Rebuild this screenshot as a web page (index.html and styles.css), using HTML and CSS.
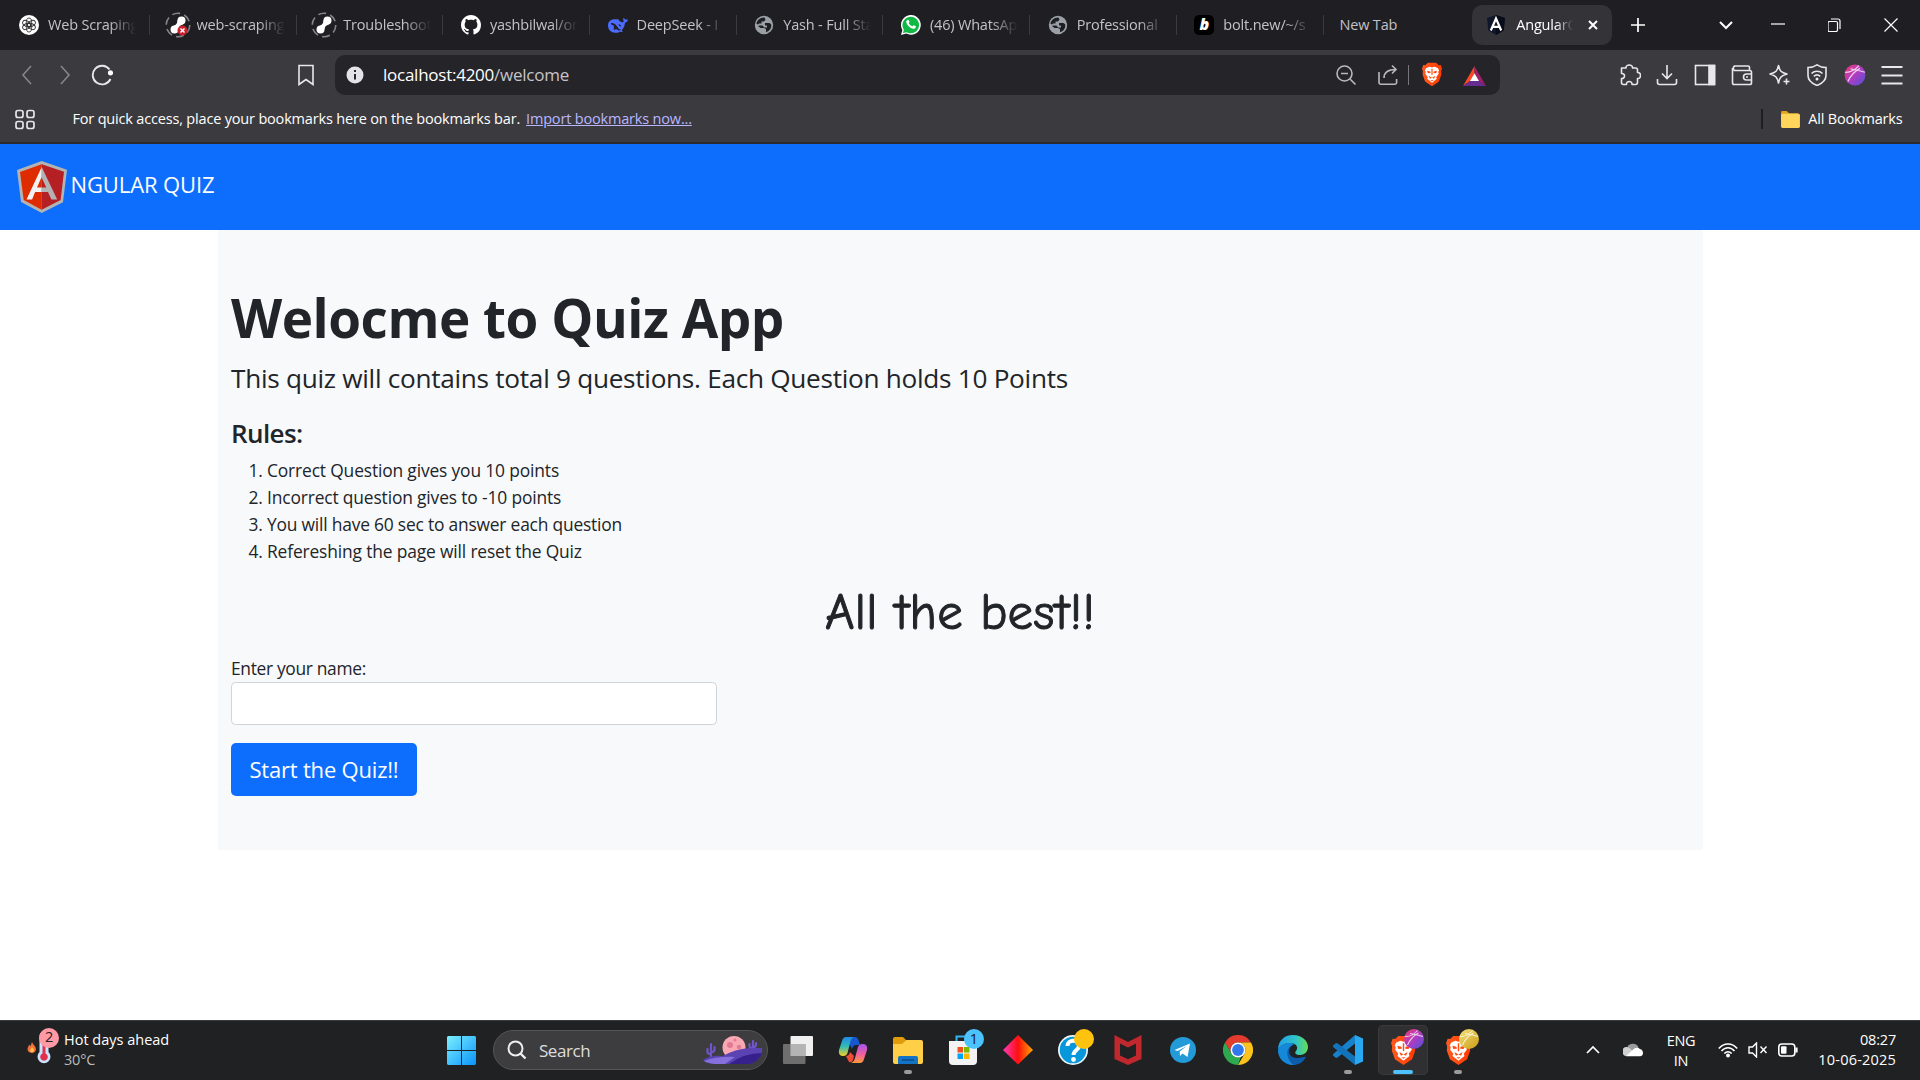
FILE: index.html
```html
<!DOCTYPE html>
<html lang="en">
<head>
<meta charset="utf-8">
<title>AngularQuiz</title>
<link rel="stylesheet" href="styles.css">
</head>
<body>
<svg class="defs" width="0" height="0">
  <defs>
    <linearGradient id="braveFill" x1="0" x2="1"><stop offset="0" stop-color="#ff5a1f"/><stop offset="1" stop-color="#ff3a00"/></linearGradient>
    <linearGradient id="pinkBall" x1="0" y1="0" x2="1" y2="1"><stop offset="0" stop-color="#ef3a78"/><stop offset=".5" stop-color="#b03cc0"/><stop offset="1" stop-color="#4d53e0"/></linearGradient>
    <linearGradient id="goldBall" x1="0" y1="0" x2="1" y2="1"><stop offset="0" stop-color="#f6e27a"/><stop offset="1" stop-color="#c99a14"/></linearGradient>
    <symbol id="brave" viewBox="0 0 24 28">
      <path fill="url(#braveFill)" d="M7 0h10l3 3 2.500-.3L24 7l-1 3 .3 4-3 8.500L12 28l-8.300-5.500L.7 14 1 10 0 7l1.500-4.300L4 3z"/>
      <path fill="#fff" d="M12 5.500l3-.8 4 1.500 1.500 3-1 1.500.5 2.500-3 4 .8 2L12 24l-5.800-4.800.8-2-3-4 .5-2.500-1-1.500L5 6.200l4-1.500z"/>
      <path fill="#ff4a10" d="M6 9.500l4 .8.400 2-3.400.200zM18 9.500l-4 .8-.4 2 3.400.200zM8 15.500l4 2.300 4-2.300-1.500 3.500L12 17.800 9.500 19zM11.300 7h1.400v7l-.7 1-.7-1zM10 20.500h4l-2 1.500z"/>
    </symbol>
    <symbol id="globe" viewBox="0 0 20 20">
      <circle cx="10" cy="10" r="9.200" fill="#9aa0a6"/>
      <path fill="#1f1e23" d="M10.500 2.500l1 2-1.500 2H7.500v2H5l-1 1-1.500-.8C2.800 5.500 6 2.300 10.500 2.500zM11 8h4.500l1.800 1.500c.3 4-2 6.800-5.300 7.700V14l-2-1H6.500L4 11l1.500-.5h3l1.500 2h3v-2h-2z"/>
    </symbol>
    <symbol id="run" viewBox="0 0 26 26">
      <circle cx="13" cy="13" r="11.800" fill="none" stroke="#85858a" stroke-width="1.600" stroke-dasharray="8 4.350"/>
      <circle cx="16.500" cy="8.500" r="4" fill="#fff"/><circle cx="9.500" cy="17.500" r="4" fill="#fff"/>
      <path fill="#fff" d="M12.500 8c0 3-1 4.500-3.500 5.500l4.500 4c0-2.500 1.500-4.500 4.500-5z"/>
    </symbol>
    <symbol id="ball" viewBox="0 0 20 20"><path d="M.8 7.500Q8 8 13.500 1.500M6 4.500Q12 5.500 19 7.500M3.500 16Q7 8 14.500 4" fill="none" stroke="#fff" stroke-opacity=".75" stroke-width="1.100"/></symbol>
  </defs>
</svg>

<header class="browser">
  <div class="tabs">
    <div class="tab first"><svg class="fav" viewBox="0 0 20 20"><circle cx="10" cy="10" r="10" fill="#fff"/><g fill="none" stroke="#333" stroke-width=".9"><ellipse cx="10" cy="7.300" rx="2.700" ry="4.300"/><ellipse cx="10" cy="7.300" rx="2.700" ry="4.300" transform="rotate(60 10 10)"/><ellipse cx="10" cy="7.300" rx="2.700" ry="4.300" transform="rotate(120 10 10)"/><ellipse cx="10" cy="7.300" rx="2.700" ry="4.300" transform="rotate(180 10 10)"/><ellipse cx="10" cy="7.300" rx="2.700" ry="4.300" transform="rotate(240 10 10)"/><ellipse cx="10" cy="7.300" rx="2.700" ry="4.300" transform="rotate(300 10 10)"/></g></svg><span class="tab-title">Web Scraping</span></div>
    <div class="tab"><svg class="fav run" viewBox="0 0 26 26"><use href="#run"/><circle cx="17.500" cy="18.500" r="5" fill="#c9202c"/><path d="M15.500 16.500l4 4m0-4l-4 4" stroke="#fff" stroke-width="1.500"/></svg><span class="tab-title">web-scraping</span></div>
    <div class="tab"><svg class="fav run"><use href="#run"/></svg><span class="tab-title">Troubleshoot</span></div>
    <div class="tab"><svg class="fav" viewBox="0 0 16 16"><path fill="#fff" d="M8 0C3.580 0 0 3.580 0 8c0 3.540 2.290 6.530 5.470 7.590.4.070.550-.170.550-.380 0-.190-.010-.820-.010-1.490-2.010.370-2.530-.490-2.690-.940-.090-.230-.480-.940-.820-1.130-.280-.150-.680-.520-.010-.530.630-.010 1.080.580 1.230.820.720 1.210 1.870.870 2.330.660.070-.520.280-.870.510-1.070-1.780-.200-3.640-.890-3.640-3.950 0-.870.310-1.590.820-2.150-.080-.200-.360-1.020.080-2.120 0 0 .670-.210 2.200.820.640-.180 1.320-.270 2-.270s1.360.090 2 .270c1.530-1.040 2.200-.820 2.200-.820.440 1.100.160 1.920.080 2.120.510.560.820 1.270.820 2.150 0 3.070-1.870 3.750-3.650 3.950.290.250.540.730.540 1.480 0 1.070-.010 1.930-.010 2.200 0 .210.150.460.550.380A8 8 0 0 0 16 8c0-4.420-3.580-8-8-8z"/></svg><span class="tab-title">yashbilwal/on</span></div>
    <div class="tab"><svg class="fav" viewBox="0 0 20 20"><path fill="#4d6bfe" d="M19.700 4.200c-.6-.2-1 .7-2.300.3-1.200-.5-1.300-1.700-1.900-1.500-.8 1.300 0 2.800.4 3.500-1 1-2.700.8-4-.3-1-1-1.700-1.600-2-2.500l-1.200.7C5.200 3.700 0 5 0 10.500c0 4.500 3.300 7.300 7.500 7.200 2.500 0 3.700-.6 4.700-1.300.7.500 1.800.8 2.500.3l-1-1.500c2.500-2.600 3-5 3.300-7.700 2-.3 2.900-1.700 2.700-3.300z"/><path fill="#1f1e23" d="M3 8c2-.5 4 .5 5.800 3s2.800 4 4.600 3.600c-1.700 1.700-3.600.4-5.400-.6-.8 1-2 .8-2.500.3C7 11 5 10 3.200 9.500zM10.500 9c1 0 2.500 1 2.500 2.500-1.300.5-2-1-2.500-2.500z"/></svg><span class="tab-title">DeepSeek - I</span></div>
    <div class="tab"><svg class="fav"><use href="#globe"/></svg><span class="tab-title">Yash - Full Sta</span></div>
    <div class="tab"><svg class="fav" viewBox="0 0 20 20"><path fill="#fff" d="M0 20l1.400-5A9.900 9.900 0 1 1 5.200 18.600z"/><path fill="#12b845" d="M1.900 18.100l1-3.400a8.300 8.300 0 1 1 2.700 2.500z"/><path fill="#fff" d="M6 5.300c.7-.8 1.500-.7 1.800 0l.6 1.500c.2.500-.7 1.100-.6 1.500.8 1.500 1.900 2.400 3.400 3 .6.200 1.100-1.200 1.600-1l2 1c.3.500-.1 2-1.500 2.400-3.200.8-8-3.800-8.100-6.900z"/></svg><span class="tab-title">(46) WhatsAp</span></div>
    <div class="tab"><svg class="fav"><use href="#globe"/></svg><span class="tab-title">Professional</span></div>
    <div class="tab"><span class="fav bolt">b</span><span class="tab-title">bolt.new/~/s</span></div>
    <div class="tab plain"><span class="tab-title">New Tab</span></div>
    <div class="tab active"><svg class="fav" viewBox="0 0 20 20"><path fill="#10172a" d="M10 0l9 3-1.300 12.500L10 20l-7.700-4.500L1 3z"/><path fill="#090d19" d="M10 0l9 3-1.300 12.500L10 20z"/><path d="M4.800 15.500L10 3.500l5.200 12M6.800 11.800h6.500" fill="none" stroke="#fff" stroke-width="2.200"/></svg><span class="tab-title">AngularQ</span><svg class="close" viewBox="0 0 10 10"><path d="M1 1l8 8M9 1L1 9"/></svg></div>
    <svg class="win plus" viewBox="0 0 14 14"><path d="M7 0v14M0 7h14"/></svg>
    <div class="controls">
      <svg class="win" viewBox="0 0 14 14"><path stroke-width="2" d="M1 4l6 6 6-6"/></svg>
      <svg class="win" viewBox="0 0 14 14"><path d="M0 6h14" stroke-width="1.200"/></svg>
      <svg class="win" viewBox="0 0 14 14"><g stroke-width="1.200"><rect x="0" y="3.500" width="9.500" height="10" rx="1.500"/><path d="M3 1h7a2 2 0 0 1 2 2v8"/></g></svg>
      <svg class="win" viewBox="0 0 14 14"><path d="M.5.5l13 13M13.500.5l-13 13" stroke-width="1.200"/></svg>
    </div>
  </div>

  <div class="toolbar">
    <div class="nav">
      <svg class="ico dim" viewBox="0 0 22 22"><path d="M15 2L7 11l8 9"/></svg>
      <svg class="ico dim" viewBox="0 0 22 22"><path d="M7 2l8 9-8 9"/></svg>
      <svg class="ico" viewBox="0 0 22 22"><path d="M19.500 15A9.300 9.300 0 1 1 18.500 5.500" stroke-width="1.900"/><circle cx="19.500" cy="8.800" r="2.600" fill="#fff" stroke="none"/></svg>
    </div>
    <svg class="ico mark" viewBox="0 0 22 22"><path d="M4 1.500h14v19l-7-5-7 5z"/></svg>
    <div class="address">
      <svg class="info" viewBox="0 0 18 18"><circle cx="9" cy="9" r="8.500" fill="#e4e3ea"/><path d="M9 4v2M9 8v5.500" stroke="#26252b" stroke-width="2"/></svg>
      <span class="url">localhost:4200<i>/welcome</i></span>
      <div class="address-icons">
        <svg class="ico soft" viewBox="0 0 22 22"><circle cx="9.500" cy="9.500" r="7.500"/><path d="M15 15l5.500 5.500M6 9.500h7"/></svg>
        <svg class="ico soft" viewBox="0 0 22 22"><path d="M2 8v10.500a1.800 1.800 0 0 0 1.800 1.800h14a1.800 1.800 0 0 0 1.800-1.800V15M7 14c0-6 4-8.500 12-8.500M15 1.500l4 4-4 4"/></svg>
        <span class="bar"></span>
        <svg class="shield"><use href="#brave"/></svg>
        <svg class="bat" viewBox="0 0 24 22" preserveAspectRatio="none"><path fill="#ff4724" d="M12 0v8L7.500 16.500 0 22z"/><path fill="#9e1f63" d="M12 0l12 22-7.500-5.500L12 8z"/><path fill="#662d91" d="M0 22l7.500-5.500h9L24 22z"/><path fill="#fff" d="M12 8l4.700 8.500H7.300z"/></svg>
      </div>
    </div>
    <div class="tools">
      <svg class="ico" viewBox="0 0 22 22"><path stroke-linejoin="round" d="M2.500 4H7c-.5-4 7-4 6.500 0h3a2 2 0 0 1 2 2v2.500c4-.5 4 6.500 0 6v4a2 2 0 0 1-2 2H13c.5-4-6-4-5.500 0h-3a2 2 0 0 1-2-2v-4c4 .5 4-5.500 0-5z"/></svg>
      <svg class="ico" viewBox="0 0 22 22"><path d="M11 1v13M6 9.500l5 5 5-5M1.500 15v3.500a2 2 0 0 0 2 2h15a2 2 0 0 0 2-2V15"/></svg>
      <svg class="ico" viewBox="0 0 22 22"><rect x="1.500" y="1.500" width="19" height="19"/><path d="M15 1.500h5.500v19H15z" fill="#e8e8ea"/></svg>
      <svg class="ico" viewBox="0 0 22 22"><path d="M18.500 6V3.500a1.500 1.500 0 0 0-1.500-1.500H3.500a2.700 2.700 0 0 0 0 4.500h15.200a1.800 1.800 0 0 1 1.800 1.800v10.400a1.800 1.800 0 0 1-1.800 1.800H3.300a1.800 1.800 0 0 1-1.800-1.800V4M20.500 10h-5a3 3 0 0 0 0 6h5M15 13h2"/></svg>
      <svg class="ico" viewBox="0 0 22 22"><path d="M9.500 1.500c1.200 5.500 2.500 7 8.500 8.500-6 1.500-7.300 3.500-8.500 9-1.200-5.500-2.500-7.500-8.500-9 6-1.500 7.300-3 8.500-8.500zM17.500 14.500v6M14.500 17.500h6" stroke-linejoin="round"/></svg>
      <svg class="ico" viewBox="0 0 22 22"><path d="M11 .8c3 2 5.500 2.700 9 2.700v8c0 5-4 8-9 10-5-2-9-5-9-10v-8c3.500 0 6-.7 9-2.700zM5.500 9.500c3-3 8-3 11 0M7.800 12.300c2-1.800 4.400-1.800 6.400 0"/><circle cx="11" cy="15" r="1.500" fill="#eee" stroke="none"/></svg>
      <svg class="ico" viewBox="0 0 20 20"><circle cx="10" cy="10" r="9.500" fill="url(#pinkBall)" stroke="none"/><use href="#ball"/></svg>
      <svg class="ico" viewBox="0 0 22 22"><path d="M.5 3h21M.5 11.500h21M.5 19.500h21" stroke-width="1.900"/></svg>
    </div>
  </div>

  <div class="bookmarks">
    <svg class="apps" viewBox="0 0 20 20"><g fill="none" stroke="#e6e6ea" stroke-width="1.700"><rect x="1" y="1" width="7" height="7" rx="2"/><rect x="12" y="1" width="7" height="7" rx="2"/><rect x="1" y="12" width="7" height="7" rx="2"/><rect x="12" y="12" width="7" height="7" rx="2"/></g></svg>
    <span class="hint">For quick access, place your bookmarks here on the bookmarks bar.</span>
    <a class="import">Import bookmarks now...</a>
    <div class="all">
      <svg class="folder" viewBox="0 0 20 18"><path fill="#e0a11b" d="M0 1.500A1.500 1.500 0 0 1 1.500 0H6l2.500 2.500H18v6H0z"/><rect y="3" width="20" height="15" rx="1.500" fill="#ffd55c"/></svg>
      <span class="all-label">All Bookmarks</span>
    </div>
  </div>
</header>

<nav class="navbar">
  <svg class="logo" viewBox="0 0 50 52"><path fill="#b3b3b3" d="M24.700 0L50 8.800l-4 32.400L24.700 52 4 41 0 9z"/><path fill="#b52025" d="M47 10.800L24.700 3.200v45.600l18.900-9.700z"/><path fill="#de2b00" d="M3 11l3.700 28 18 9.800V3.200z"/><path fill="#f2f2f2" d="M24.700 6L9.500 38.500h5.600l3-7.500h6.600v-4.500h-4.700l4.700-10.800z"/><path fill="#b3b3b3" d="M24.700 6l15.500 32.500h-5.800L31 31h-6.300v-4.500h4.500l-4.500-10z"/></svg>
  <span class="brand">NGULAR QUIZ</span>
</nav>

<main class="page">
  <section class="container">
    <h1 class="title">Welocme to Quiz App</h1>
    <p class="lead">This quiz will contains total 9 questions. Each Question holds 10 Points</p>
    <h4 class="rules">Rules:</h4>
    <ol class="list">
      <li>Correct Question gives you 10 points</li>
      <li>Incorrect question gives to -10 points</li>
      <li>You will have 60 sec to answer each question</li>
      <li>Refereshing the page will reset the Quiz</li>
    </ol>
    <p class="wish">All the best!!</p>
    <label class="label" for="name">Enter your name:</label>
    <input class="field" id="name" type="text">
    <button class="start">Start the Quiz!!</button>
  </section>
</main>

<footer class="taskbar">
  <div class="weather">
    <svg class="thermo" viewBox="0 0 34 40"><path fill="#f2703c" d="M5 14c1 3 4 4 4 7.500A4.300 4.300 0 0 1 .5 21c0-2 1.500-2.500 1.500-4.500L3.500 18z"/><path fill="#ffc04a" d="M5 19c1 1.500 2 2 2 3.300a2 2 0 0 1-4 0z"/><path fill="#c9e3fb" d="M12.500 8a4.500 4.500 0 0 1 9 0v16a6.500 6.500 0 1 1-9 0z"/><path fill="#e0304e" d="M15.500 12h3v13.500a3.800 3.800 0 1 1-3 0z"/><circle cx="22" cy="10" r="10" fill="#ff99a4"/></svg>
    <span class="weather-count">2</span>
    <div class="weather-text"><span>Hot days ahead</span><span class="temp">30°C</span></div>
  </div>
  <div class="dock">
    <svg class="winlogo" viewBox="0 0 29 29"><defs><linearGradient id="wl" x1="0" y1="0" x2="1" y2="1"><stop offset="0" stop-color="#7bf0ff"/><stop offset="1" stop-color="#0a93fb"/></linearGradient></defs><path fill="url(#wl)" d="M1 0h13v14H0V1zM15 0h13l1 1v13H15zM0 15h14v14H1l-1-1zM15 15h14v13l-1 1H15z"/></svg>
    <div class="search">
      <svg class="glass" viewBox="0 0 20 20"><circle cx="8.500" cy="8.500" r="7" fill="none" stroke="#eee" stroke-width="2"/><path d="M13.500 13.500l5 5" stroke="#eee" stroke-width="2.400"/></svg>
      <span class="search-label">Search</span>
      <svg class="moon" viewBox="0 0 60 30"><circle cx="31" cy="12.500" r="11.500" fill="#f9a9b4"/><g fill="#e27a90"><circle cx="27" cy="10" r="3"/><circle cx="36" cy="12" r="2.300"/><circle cx="32" cy="5" r="1.500"/></g><g fill="none" stroke="#7055c8" stroke-width="2.200" stroke-linecap="round"><path d="M8 9v14M4.500 14v3q0 2 3.500 2M11.500 12v3q0 2-3.500 2M50 6v10M46.500 9v2q0 2 3.500 2M53 8v2q0 2-3 2"/></g><path fill="#5b43b4" d="M0 25q8-5 20-4 12-7 26-8h13q2 10-12 16H12Q2 28 0 25z"/><path fill="#35208c" d="M26 29q15-11 33-11-3 8-12 11z"/><path fill="#8570dc" d="M1 26q14-5 31-4l-10 7H12Q4 28 1 26z"/></svg>
    </div>
    <div class="apps-row">
      <div class="app"><svg viewBox="0 0 30 30"><rect x="7.500" y="1" width="22.500" height="20" rx="1" fill="#f0f0f0"/><rect x="0" y="9" width="22.500" height="20" rx="1" fill="#777" fill-opacity=".9"/><path fill="#b4b4b4" d="M7.500 9h15v12h-15z"/></svg></div>
      <div class="app"><svg viewBox="0 0 30 30"><defs><linearGradient id="c1" x1="0" y1="0" x2="0" y2="1"><stop offset="0" stop-color="#2188e8"/><stop offset=".5" stop-color="#33bcb4"/><stop offset="1" stop-color="#f6cf25"/></linearGradient><linearGradient id="c2" x1="0" y1="0" x2="0" y2="1"><stop offset="0" stop-color="#a155ee"/><stop offset=".55" stop-color="#f0609c"/><stop offset="1" stop-color="#ff9a3d"/></linearGradient></defs><path fill="#1758cf" d="M8 2h9q3 0 4 5l1 3h-4q-3 0-4 4l-4-8z"/><path fill="url(#c1)" d="M8 2h8q-3 1-4 6L9.500 18q-1 3-4 3H4q-4-1-3-6L4 6q1-4 4-4z"/><path fill="#f04b34" d="M8 21q3 0 4-4l4 4-1 4q-1 3-4 2z"/><path fill="url(#c2)" d="M22 28h-9q3-1 4-5l3-11q1-3 4-3h2q4 1 3 6l-3 9q-1 4-4 4z"/></svg></div>
      <div class="app running"><svg viewBox="0 0 30 30"><path fill="#e19b0b" d="M0 4a2 2 0 0 1 2-2h8l3 3-3 4H0z"/><path fill="#ffcf48" d="M0 9h9l4-4h15a2 2 0 0 1 2 2v20a2 2 0 0 1-2 2H2a2 2 0 0 1-2-2z"/><path fill="#1373c5" d="M5 29v-6a2 2 0 0 1 2-2h16a2 2 0 0 1 2 2v6z"/><path stroke="#0a4b8e" stroke-width="1.500" d="M9 25h12"/></svg></div>
      <div class="app"><svg viewBox="0 0 30 30"><path d="M8.500 7V1.500h9V7" fill="none" stroke="#35b5ef" stroke-width="2"/><path fill="#f3f3f3" d="M1 6h28v20a4 4 0 0 1-4 4H5a4 4 0 0 1-4-4z"/><path fill="#f25022" d="M9.500 12H15v5.500H9.500z"/><path fill="#7fba00" d="M16 12h5.500v5.500H16z"/><path fill="#00a4ef" d="M9.500 18.500H15V24H9.500z"/><path fill="#ffb900" d="M16 18.500h5.500V24H16z"/></svg><span class="badge blue">1</span></div>
      <div class="app"><svg viewBox="0 0 30 30"><defs><linearGradient id="dm"><stop offset="0" stop-color="#ff38bd"/><stop offset=".5" stop-color="#ff0e0e"/><stop offset="1" stop-color="#ffa800"/></linearGradient></defs><path fill="url(#dm)" d="M15 0l15 15-15 14.500L0 15z"/></svg></div>
      <div class="app"><svg viewBox="0 0 30 30"><circle cx="15" cy="15" r="15" fill="#eef8ff"/><circle cx="15" cy="15" r="13.300" fill="#0997dc"/><path d="M9.500 11c0-7 11.500-7 11.500 0 0 4-5.500 4-5.500 9" fill="none" stroke="#fff" stroke-width="4"/><circle cx="15.500" cy="24.500" r="2.400" fill="#fff"/></svg><span class="badge gold"></span></div>
      <div class="app"><svg viewBox="0 0 30 30"><path fill="#c0282e" d="M1.500 0L15 7 28.500 0v24L15 30 1.500 24zM7 8.500v12l8 3.700 8-3.700v-12l-8 4z" fill-rule="evenodd"/></svg></div>
      <div class="app"><svg viewBox="0 0 30 30"><circle cx="15" cy="15" r="13" fill="#229bd8"/><path fill="#fff" d="M6.500 15l15.500-6.500-2.500 13.500-5-3.500-2.500 2.500-.3-4.500 7-5.500-9 5z"/></svg></div>
      <div class="app"><svg viewBox="0 0 30 30"><path fill="#e33b2e" d="M2 7.500a15 15 0 0 1 26 0H15a7.500 7.500 0 0 0-6.500 11.200z"/><path fill="#fcc31e" d="M28 7.500A15 15 0 0 1 15 30l6.500-11.300A7.500 7.500 0 0 0 15 7.500z"/><path fill="#2da94f" d="M2 7.500l6.500 11.200a7.500 7.500 0 0 0 9.500 3L15 30A15 15 0 0 1 2 7.500z"/><circle cx="15" cy="15" r="7.500" fill="#fff"/><circle cx="15" cy="15" r="5.900" fill="#2f78ee"/></svg></div>
      <div class="app"><svg viewBox="0 0 30 30"><defs><linearGradient id="e1"><stop offset="0" stop-color="#229ee8"/><stop offset=".6" stop-color="#30c5c8"/><stop offset="1" stop-color="#67dc52"/></linearGradient></defs><path fill="#0d5cab" d="M0 15C4 7 11 7 15 10c-6 3-5 13 4 13 4 0 8-2 9-1-3 6-8 8-13 8C6 30 0 23 0 15z"/><path fill="url(#e1)" d="M0 15C0 6 6 0 15 0s15 6 15 12c0 5-4 8-8 8s-6-2-4-4c3-4 0-8-6-8C6 8 2 11 0 15z"/><path fill="#1588d8" d="M0 15C2 10 7 8 12 8c2 0 3 .5 4 1.500C10 11 8 17 10 22c1 4 4 7 6 8C6 30 0 23 0 15z"/></svg></div>
      <div class="app running"><svg viewBox="0 0 30 30"><path fill="#1782cc" d="M22 0v8.500L4.500 22.500 3 23 0 20.500v-1.300z"/><path fill="#1273b9" d="M0 10.500L3 8l1.500.3L22 21.500V30L0 12z"/><path fill="#29a8f2" d="M22 0l8 3.500v23L22 30z"/></svg></div>
      <div class="app current"><svg class="lion"><use href="#brave"/></svg><svg class="ball" viewBox="0 0 20 20"><circle cx="10" cy="10" r="10" fill="url(#pinkBall)"/><use href="#ball"/></svg></div>
      <div class="app running"><svg class="lion"><use href="#brave"/></svg><svg class="ball" viewBox="0 0 20 20"><circle cx="10" cy="10" r="10" fill="url(#goldBall)"/><use href="#ball"/></svg></div>
    </div>
  </div>
  <div class="tray">
    <svg class="up" viewBox="0 0 14 14"><path d="M1 10l6-6 6 6" fill="none" stroke="#fff" stroke-width="1.700"/></svg>
    <svg class="cloud" viewBox="0 0 20 14"><path fill="#9b9b9b" d="M4 6a6 6 0 0 1 11.500-1.500L12 9z"/><path fill="#d0d0d0" d="M4 13A4.500 4.500 0 1 1 7 5.500l6 5z"/><path fill="#fff" d="M3 13.300l8-7.500A5 5 0 0 1 17 6c4 1 4 7 0 7.300z"/></svg>
    <div class="lang"><span>ENG</span><span>IN</span></div>
    <svg class="wifi" viewBox="0 0 20 16"><g fill="none" stroke="#fff" stroke-width="1.500"><path d="M.8 6.500c5-6 13.400-6 18.400 0M3.500 9c3.800-4.500 9.200-4.500 13 0M6.300 11.500c2.300-2.500 5.100-2.500 7.400 0"/></g><circle cx="10" cy="13.500" r="2" fill="#fff"/></svg>
    <svg class="sound" viewBox="0 0 20 16"><path d="M1 5h3.500L8.500 1v14l-4-4H1zM12.500 4.500l6 6.500M18.500 4.500l-6 6.500" fill="none" stroke="#fff" stroke-width="1.400"/></svg>
    <svg class="battery" viewBox="0 0 20 14"><rect x=".8" y="1" width="16" height="12" rx="3" fill="none" stroke="#fff" stroke-width="1.600"/><rect x="3" y="3.300" width="5.500" height="7.400" rx="1" fill="#fff"/><path stroke="#fff" stroke-width="2.200" d="M18.500 4.500v5"/></svg>
    <div class="clock"><span class="time">08:27</span><span class="date">10-06-2025</span></div>
  </div>
</footer>
</body>
</html>
```
FILE: styles.css
```css
* { box-sizing: border-box; }

body {
  margin: 0;
  width: 1920px;
  height: 1080px;
  overflow: hidden;
  display: flex;
  flex-direction: column;
  background: #fff;
  color: #212529;
  font-family: "Segoe UI", "Open Sans", "Noto Sans", sans-serif;
  font-size: 17.400px;
  line-height: 27px;
}

svg { display: block; flex: none; }
.defs { position: absolute; }

/* Browser chrome */
.browser { height: 144px; background: #3b3a3f; border-bottom: 2px solid #2c2b31; color: #fff; font-size: 14.500px; line-height: 20px; letter-spacing: -.18px; }

.tabs { display: flex; align-items: center; height: 50px; background: #1f1e23; }
.tab { display: flex; align-items: center; width: 146.700px; height: 20px; padding-left: 17.500px; gap: 9px; border-right: 1px solid #3b3a40; color: #c3c2c7; }
.tab.first { width: 150px; padding-left: 19px; }
.fav { width: 20px; height: 20px; }
.fav.run { width: 26px; height: 26px; margin: 0 -3px; }
.tab-title { width: 88px; overflow: hidden; white-space: nowrap; -webkit-mask-image: linear-gradient(90deg, #000 70%, transparent); mask-image: linear-gradient(90deg, #000 70%, transparent); }
.bolt { border-radius: 5px; background: #000; color: #fff; text-align: center; font: italic 900 16px/19px "Open Sans", sans-serif; }
.tab.plain { border: 0; padding-left: 16px; }
.plain .tab-title { -webkit-mask-image: none; mask-image: none; }
.tab.active { width: 140px; height: 40px; margin-left: 2px; padding-left: 14px; gap: 10px; border: 0; border-radius: 10px; background: #343338; color: #fff; }
.tab.active .tab-title { width: 57px; }
.close { width: 10px; height: 10px; margin-left: 5px; stroke: #fff; stroke-width: 2; }
.win { width: 14px; height: 14px; fill: none; stroke: #fff; stroke-width: 1.700; }
.plus { margin-left: 19px; }
.controls { display: flex; gap: 42px; margin-left: auto; padding-right: 22px; }
.controls .win:first-child { margin-right: -4px; }
.controls .win:nth-child(2) { margin-right: 1px; }

.toolbar { display: flex; align-items: center; height: 50px; }
.ico { width: 22px; height: 22px; fill: none; stroke: #e8e8ea; stroke-width: 1.600; }
.ico.dim { stroke: #86858a; }
.ico.soft { stroke: #b9b8bd; }
.nav { display: flex; gap: 15.500px; padding-left: 16px; width: 295px; }
.address { display: flex; align-items: center; width: 1165px; height: 40px; margin-left: 18px; padding: 0 14px 0 11px; border-radius: 10px; background: #252429; }
.info { width: 18px; height: 18px; }
.url { margin-left: 19px; font-size: 17px; letter-spacing: -.25px; }
.url i { font-style: normal; color: #c6c5ca; }
.address-icons { display: flex; align-items: center; margin-left: auto; }
.address-icons .soft { margin-right: 20px; }
.bar { width: 1px; height: 20px; margin-left: -11px; background: #77767b; }
.shield { width: 20px; height: 25px; margin: -1px 21px 0 13px; }
.bat { width: 23px; height: 20px; margin-top: 1px; }
.tools { display: flex; gap: 15.500px; margin-left: auto; padding-right: 17px; }

.bookmarks { display: flex; align-items: center; height: 38px; padding: 0 17.500px 0 15px; }
.apps { width: 20px; height: 21px; }
.hint { margin: -1px 0 0 37.500px; white-space: nowrap; }
.import { margin: -1px 0 0 6px; color: #b9b6ff; text-decoration: underline; white-space: nowrap; }
.all { display: flex; align-items: center; gap: 8px; height: 20px; margin-left: auto; padding-left: 18px; border-left: 2px solid #1f1e23; }
.all-label { margin-top: -1px; }
.folder { width: 19px; height: 17px; }

/* Quiz page */
.navbar { display: flex; height: 86px; padding: 17px 0 0 17px; background: #0d6efd; color: #fff; font-size: 22px; line-height: 34px; letter-spacing: -.1px; }
.logo { width: 50px; height: 52px; }
.brand { margin: 6px 0 0 3.500px; white-space: nowrap; }

.page { flex: 1; }
.container { display: flex; flex-direction: column; align-items: flex-start; width: 1485px; height: 620px; margin: 0 auto; padding: 55px 13.500px 0; background: #f8f9fa; }
.title { margin: 0; font-size: 53px; line-height: 65px; letter-spacing: -.48px; white-space: nowrap; }
.lead { margin: 8px 0 0; font-size: 26.200px; line-height: 41px; letter-spacing: -.29px; white-space: nowrap; }
.rules { margin: 18px 0 0; font-size: 26px; line-height: 32px; letter-spacing: -.6px; font-weight: 600; }
.list { margin: 8px 0 0; padding-left: 36px; letter-spacing: -.15px; white-space: nowrap; }
.list li:nth-child(3) { letter-spacing: -.2px; }
.wish { align-self: center; margin: 15px 0 19px; font-family: "Comic Sans MS", "Comic Neue", "Open Sans", cursive; font-size: 51px; line-height: 66px; letter-spacing: .2px; white-space: nowrap; -webkit-text-stroke: 1px #212529; }
.label { margin-top: -10px; letter-spacing: -.33px; }
.field { width: 486px; height: 43px; border: 1px solid #ced4da; border-radius: 4.500px; background: #fff; }
.start { width: 186px; height: 53px; margin-top: 18px; padding: 0; border: 0; border-radius: 5px; background: #0d6efd; color: #fff; font: inherit; font-size: 22px; letter-spacing: -.2px; white-space: nowrap; }

/* Windows taskbar */
.taskbar { display: flex; height: 60px; padding-bottom: 1px; border-top: 1px solid #3a3b3b; background: #202122; color: #fff; font-size: 14.500px; line-height: 20px; }
.weather { position: relative; display: flex; width: 447px; padding: 7px 0 0 27px; }
.thermo { width: 34px; height: 40px; }
.weather-count { position: absolute; left: 45px; top: 6px; color: #222; }
.weather-text { display: flex; flex-direction: column; padding: 2px 0 0 3px; white-space: nowrap; }
.temp { color: #bcbcbc; letter-spacing: -.2px; }
.dock { display: flex; align-items: center; }
.winlogo { width: 29px; height: 29px; }
.search { display: flex; align-items: center; width: 275px; height: 40px; margin-left: 17px; padding: 0 4px 0 13px; border: 1px solid #555557; border-radius: 20px; background: #3d3d3f; color: #ddd; font-size: 17px; letter-spacing: -.45px; }
.glass { width: 20px; height: 20px; }
.search-label { margin: 1px 0 0 12px; }
.moon { width: 60px; height: 30px; margin-left: auto; }
.apps-row { display: flex; gap: 5px; margin-left: 5px; }
.app { position: relative; display: flex; align-items: center; justify-content: center; width: 50px; height: 50px; border-radius: 5px; }
.app > svg { width: 30px; height: 30px; }
.app > .lion { width: 25px; height: 29px; }
.app > .ball { position: absolute; right: 4px; top: 4px; width: 20px; height: 20px; }
.app.running::after, .app.current::after { content: ""; position: absolute; bottom: 1px; width: 8px; height: 4px; border-radius: 2px; background: #9a9a9a; }
.app.current { background: #303033; box-shadow: inset 0 0 0 1px #3a3a3d; }
.app.current::after { width: 20px; background: #4cc2ff; }
.badge { position: absolute; right: 4px; top: 4px; width: 20px; height: 20px; border-radius: 50%; color: #1b1b1b; text-align: center; }
.badge.blue { background: #4cc2ff; }
.badge.gold { background: #ffc20e; }
.tray { display: flex; align-items: center; margin-left: auto; padding-right: 24px; }
.up { width: 14px; height: 14px; }
.cloud { width: 20px; height: 14px; margin-left: 23px; }
.lang { display: flex; flex-direction: column; align-items: center; width: 30px; margin: 1px 22px 0 23px; letter-spacing: -.3px; }
.wifi { width: 20px; height: 16px; }
.sound { width: 20px; height: 16px; margin-left: 10px; }
.battery { width: 20px; height: 14px; margin-left: 10px; }
.clock { display: flex; flex-direction: column; align-items: flex-end; width: 78px; margin: -1px 0 0 20px; white-space: nowrap; }
.time { letter-spacing: -.2px; }
.date { letter-spacing: .2px; }
```
